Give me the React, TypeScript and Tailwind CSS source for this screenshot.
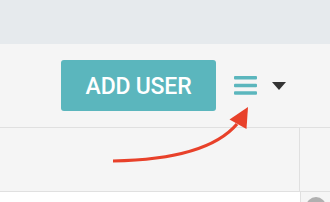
import React from "react";

export default function App() {
  return (
    <div className="relative w-[330px] h-[202px] overflow-hidden bg-[#f5f5f5]" style={{ fontFamily: "Roboto, 'Liberation Sans', sans-serif" }}>
      <div className="h-[44px] bg-[#e6eaed]" />
      <div className="h-[83px] flex items-center justify-end pr-[44px]">
        <button className="w-[155px] h-[51px] rounded-[3px] bg-[#5bb6bd] text-white text-[23px] font-medium leading-none tracking-[-0.2px] pt-[1px]">
          ADD USER
        </button>
        <svg width="23" height="20" viewBox="0 0 23 20" className="ml-[18px]">
          <rect x="0" y="0" width="23" height="3.5" rx="1" fill="#5bb6bd" />
          <rect x="0" y="7.7" width="23" height="3.5" rx="1" fill="#5bb6bd" />
          <rect x="0" y="15.3" width="23" height="3.5" rx="1" fill="#5bb6bd" />
        </svg>
        <svg width="14" height="8" viewBox="0 0 14 8" className="ml-[15px] mt-[1px]">
          <path d="M0 0 H14 L7 8 Z" fill="#333" />
        </svg>
      </div>
      <div className="flex h-[65px] border-y border-[#e0e0e0]">
        <div className="flex-1 border-r border-[#e0e0e0]" />
        <div className="w-[30px]" />
      </div>
      <div className="flex h-[10px]">
        <div className="w-[300px] bg-white" />
        <div className="flex-1 border-l border-[#e0e0e0] flex justify-center pt-[5px] overflow-hidden">
          <div className="w-[20px] h-[20px] shrink-0 rounded-full bg-[#b0b0b0]" />
        </div>
      </div>
      <svg className="absolute left-0 top-0 pointer-events-none" width="330" height="202" viewBox="0 0 330 202">
        <path d="M113 161 C 170 160 215 150 237 124" fill="none" stroke="#e8412a" strokeWidth="3.2" />
        <path d="M248 107 L229.5 119.5 L246.5 129 Z" fill="#e8412a" />
      </svg>
    </div>
  );
}
